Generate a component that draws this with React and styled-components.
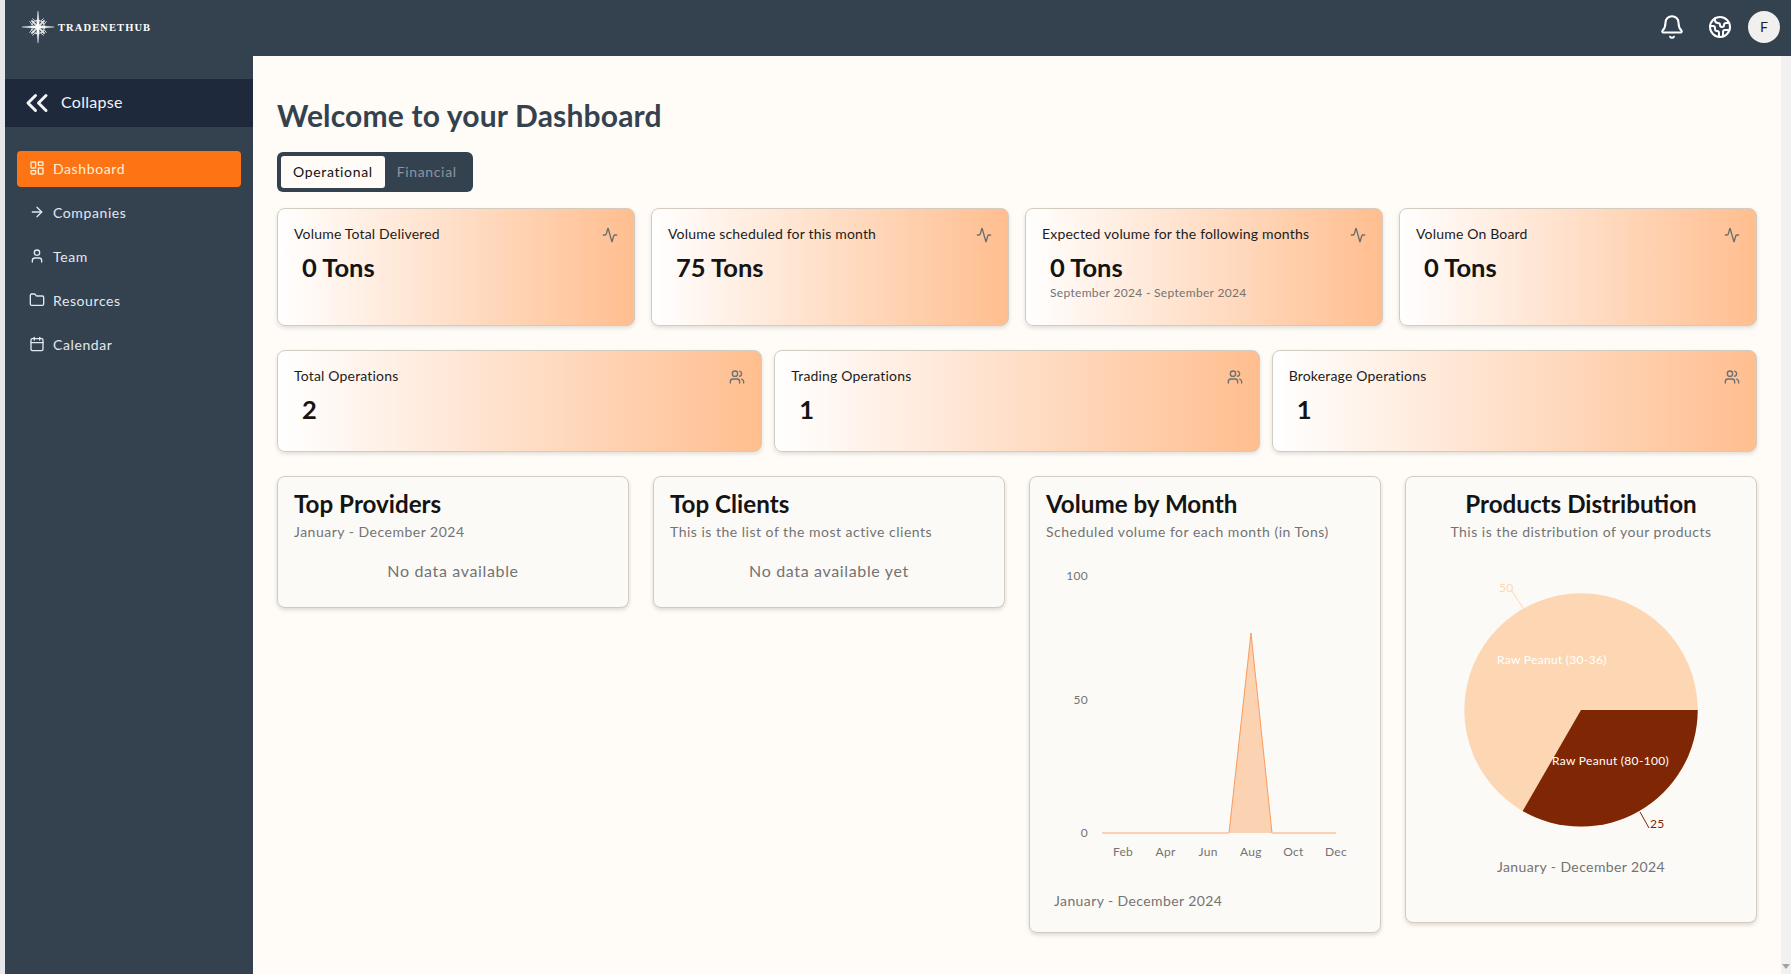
import React from 'react';
import styled, { createGlobalStyle } from 'styled-components';
import { LayoutDashboard, ArrowRight, User, Folder, Calendar, Activity, Users, Bell, Earth, ChevronsLeft } from 'lucide-react';

const Global = createGlobalStyle`
  html, body { margin: 0; padding: 0; height: 100%; overflow: hidden; background: #e5e7eb; }
  #root { height: 100%; }
  * { box-sizing: border-box; }
`;

const FONT = `Lato, "Open Sans", sans-serif`;

const Shell = styled.div`
  height: 974px;
  margin-left: 5px;
  display: flex;
  flex-direction: column;
  font-family: ${FONT};
`;

const Header = styled.header`
  height: 56px;
  flex: none;
  background: #344250;
  display: flex;
  align-items: center;
  padding: 0 11px 2px 16px;
  color: #fff;
`;

const Logo = styled.div`
  display: flex;
  align-items: center;
  gap: 3px;
  font-family: "Liberation Serif", serif;
  font-weight: 700;
  font-size: 10.5px;
  letter-spacing: 1.1px;
  span { padding-top: 1px; }
`;

const HeaderIcons = styled.div`
  margin-left: auto;
  display: flex;
  align-items: center;
`;

const HeaderBtn = styled.span`
  display: flex;
  margin-right: ${(p) => p.$mr}px;
`;

const Avatar = styled.div`
  width: 32px;
  height: 32px;
  border-radius: 50%;
  background: #f1f0ee;
  color: #1a2433;
  font-size: 14px;
  padding-bottom: 2px;
  display: flex;
  align-items: center;
  justify-content: center;
`;

const Body = styled.div`
  flex: 1;
  display: flex;
  min-height: 0;
`;

const Sidebar = styled.aside`
  width: 248px;
  flex: none;
  background: #344250;
  padding-top: 23px;
`;

const CollapseBar = styled.div`
  height: 48px;
  background: #1e293b;
  color: #f1f5f9;
  display: flex;
  align-items: center;
  padding: 0 0 3px 14px;
  gap: 6px;
  font-size: 16px;
  letter-spacing: 0.3px;
  margin-bottom: 24px;
  svg { transform: translateY(1px); }
`;

const Nav = styled.nav`
  display: flex;
  flex-direction: column;
  gap: 8px;
  padding: 0 12px;
`;

const NavItem = styled.div`
  height: 36px;
  border-radius: 4px;
  display: flex;
  align-items: center;
  gap: 8px;
  padding: 0 0 2px 12px;
  font-size: 14px;
  letter-spacing: 0.6px;
  color: ${(p) => (p.$active ? '#ffedd5' : '#e2e8f0')};
  background: ${(p) => (p.$active ? '#fd7415' : 'transparent')};
`;

const Main = styled.main`
  flex: 1;
  min-width: 0;
  background: #fffbf6;
  overflow: hidden;
  padding: 41px 24px 0;
`;

const ScrollTrack = styled.div`
  width: 10px;
  flex: none;
  background: #f1f1f1;
  display: flex;
  align-items: flex-end;
  justify-content: center;
  padding-bottom: 5px;
`;

const ScrollArrow = styled.div`
  width: 0;
  height: 0;
  border-left: 4px solid transparent;
  border-right: 4px solid transparent;
  border-top: 5px solid #a3a3a3;
`;

const Title = styled.h1`
  margin: 0;
  color: #344250;
  font-size: 30px;
  font-weight: 700;
  line-height: 36px;
  letter-spacing: 0.18px;
`;

const Tabs = styled.div`
  display: inline-flex;
  margin-top: 19px;
  height: 40px;
  padding: 4px;
  border-radius: 6px;
  background: #344250;
  vertical-align: top;
`;

const Tab = styled.div`
  display: flex;
  align-items: center;
  height: 32px;
  padding: 0 12px 2px;
  border-radius: 3px;
  font-size: 14px;
  letter-spacing: 0.65px;
  color: ${(p) => (p.$active ? '#111' : '#8b95a0')};
  background: ${(p) => (p.$active ? '#fffbf6' : 'transparent')};
`;

const StatRow = styled.div`
  display: grid;
  grid-template-columns: repeat(${(p) => p.$cols}, 1fr);
  gap: ${(p) => p.$gap}px;
  margin-top: ${(p) => p.$top}px;
`;

const StatCard = styled.div`
  height: ${(p) => p.$h}px;
  border: 1px solid #d3cbc0;
  border-radius: 8px;
  box-shadow: 0 2px 4px rgba(0, 0, 0, 0.12);
  background: linear-gradient(to right, #fff 0%, #ffbe8f 100%);
  padding: 14px 16px;
`;

const StatHead = styled.div`
  display: flex;
  justify-content: space-between;
  align-items: center;
  height: 20px;
  color: #1c1c1c;
  font-size: 14px;
  letter-spacing: 0.18px;
  svg { color: #6b7070; flex: none; transform: translateY(2px); }
`;

const StatValue = styled.div`
  margin-top: 8px;
  padding-left: 8px;
  font-size: 25.5px;
  line-height: 32px;
  font-weight: 700;
  color: #141414;
`;

const StatNote = styled.div`
  margin-top: 2px;
  padding-left: 8px;
  font-size: 12px;
  letter-spacing: 0.32px;
  color: #737373;
  line-height: 16px;
`;

const Panels = styled.div`
  display: grid;
  grid-template-columns: repeat(4, 1fr);
  gap: 24px;
  margin-top: 24px;
  align-items: start;
`;

const Panel = styled.section`
  height: ${(p) => p.$h}px;
  border: 1px solid #d3cbc0;
  border-radius: 8px;
  background: #fcfaf7;
  box-shadow: 0 2px 4px rgba(0, 0, 0, 0.14);
  padding: 11px 16px;
  text-align: ${(p) => (p.$center ? 'center' : 'left')};
`;

const PanelTitle = styled.h2`
  margin: 0;
  font-size: 24.2px;
  line-height: 32px;
  font-weight: 700;
  color: #141414;
`;

const PanelSub = styled.p`
  margin: 2px 0 0;
  font-size: 14px;
  line-height: 20px;
  letter-spacing: 0.5px;
  color: #737373;
`;

const Empty = styled.div`
  margin-top: 18px;
  text-align: center;
  font-size: 16px;
  line-height: 22px;
  letter-spacing: 0.65px;
  color: #737373;
`;

const ChartWrap = styled.div`
  margin: 13px -16px 0;
  height: ${(p) => p.$h}px;
`;

const PanelFoot = styled.div`
  font-size: 14px;
  line-height: 20px;
  letter-spacing: 0.4px;
  color: #737373;
  padding-left: ${(p) => p.$indent || 0}px;
  margin-top: 6px;
`;

const ChartText = styled.text`
  font-family: ${FONT};
  font-size: ${(p) => p.$size || 12}px;
  letter-spacing: 0.3px;
  fill: ${(p) => p.$fill || '#737373'};
`;

const LogoMark = () => (
  <svg width="34" height="34" viewBox="0 0 36 36" fill="none" stroke="#fff">
    <path d="M18 1 L19.4 16.6 L35 18 L19.4 19.4 L18 35 L16.6 19.4 L1 18 L16.6 16.6 Z" fill="#fff" strokeWidth="0.4" />
    <circle cx="18" cy="18" r="7" strokeWidth="1.4" strokeDasharray="2 1" opacity="0.8" />
    <path d="M11 11 L25 25 M25 11 L11 25" strokeWidth="2" opacity="0.85" />
    <path d="M12 9 L18 14 L24 9 M27 12 L22 18 L27 24 M24 27 L18 22 L12 27 M9 24 L14 18 L9 12" strokeWidth="0.8" />
  </svg>
);

const AreaChart = () => {
  const months = ['Feb', 'Apr', 'Jun', 'Aug', 'Oct', 'Dec'];
  return (
    <svg width="350" height="330" viewBox="0 0 350 330">
      <ChartText x="58" y="25" textAnchor="end">100</ChartText>
      <ChartText x="58" y="149" textAnchor="end">50</ChartText>
      <ChartText x="58" y="282" textAnchor="end">0</ChartText>
      <path d="M199 278 L221 78 L242 278 Z" fill="#fbd2b2" />
      <path d="M199 278 L221 78 L242 278" fill="none" stroke="#fb9a5a" strokeWidth="1" />
      <path d="M72 278 L199 278 M242 278 L306 278" fill="none" stroke="#fbc39b" strokeWidth="1.6" />
      {months.map((m, i) => (
        <ChartText key={m} x={93 + i * 42.6} y={301} textAnchor="middle">{m}</ChartText>
      ))}
    </svg>
  );
};

const PieChart = () => (
  <svg width="350" height="296" viewBox="0 0 350 296">
    <circle cx="175" cy="155" r="116.7" fill="#fdd7b4" />
    <path d="M175 155 L291.7 155 A116.7 116.7 0 0 1 116.7 256 Z" fill="#7f2604" />
    <path d="M117 53 L106 36" stroke="#fdd7b4" fill="none" />
    <path d="M234 257 L243 273" stroke="#7f2604" fill="none" />
    <ChartText x="93" y="37" $fill="#fdd7b4">50</ChartText>
    <ChartText x="244" y="273" $fill="#7f2604">25</ChartText>
    <ChartText x="91" y="109" $fill="#fff">Raw Peanut (30-36)</ChartText>
    <ChartText x="146" y="210" $fill="#fff">Raw Peanut (80-100)</ChartText>
  </svg>
);

const navItems = [
  { label: 'Dashboard', Icon: LayoutDashboard, active: true },
  { label: 'Companies', Icon: ArrowRight },
  { label: 'Team', Icon: User },
  { label: 'Resources', Icon: Folder },
  { label: 'Calendar', Icon: Calendar },
];

const volumeStats = [
  { title: 'Volume Total Delivered', value: '0 Tons' },
  { title: 'Volume scheduled for this month', value: '75 Tons' },
  { title: 'Expected volume for the following months', value: '0 Tons', note: 'September 2024 - September 2024' },
  { title: 'Volume On Board', value: '0 Tons' },
];

const opStats = [
  { title: 'Total Operations', value: '2' },
  { title: 'Trading Operations', value: '1' },
  { title: 'Brokerage Operations', value: '1' },
];

export default function App() {
  return (
    <>
      <Global />
      <Shell>
        <Header>
          <Logo>
            <LogoMark />
            <span>TRADENETHUB</span>
          </Logo>
          <HeaderIcons>
            <HeaderBtn $mr={23}><Bell size={26} strokeWidth={1.9} /></HeaderBtn>
            <HeaderBtn $mr={16}><Earth size={24} strokeWidth={2} /></HeaderBtn>
            <Avatar>F</Avatar>
          </HeaderIcons>
        </Header>
        <Body>
          <Sidebar>
            <CollapseBar>
              <ChevronsLeft size={36} strokeWidth={2} />
              Collapse
            </CollapseBar>
            <Nav>
              {navItems.map(({ label, Icon, active }) => (
                <NavItem key={label} $active={active}>
                  <Icon size={16} />
                  {label}
                </NavItem>
              ))}
            </Nav>
          </Sidebar>
          <Main>
            <Title>Welcome to your Dashboard</Title>
            <div>
              <Tabs>
                <Tab $active>Operational</Tab>
                <Tab>Financial</Tab>
              </Tabs>
            </div>
            <StatRow $cols={4} $gap={16} $top={16}>
              {volumeStats.map((s) => (
                <StatCard key={s.title} $h={118}>
                  <StatHead>{s.title}<Activity size={16} /></StatHead>
                  <StatValue>{s.value}</StatValue>
                  {s.note && <StatNote>{s.note}</StatNote>}
                </StatCard>
              ))}
            </StatRow>
            <StatRow $cols={3} $gap={12} $top={24}>
              {opStats.map((s) => (
                <StatCard key={s.title} $h={102}>
                  <StatHead>{s.title}<Users size={16} /></StatHead>
                  <StatValue>{s.value}</StatValue>
                </StatCard>
              ))}
            </StatRow>
            <Panels>
              <Panel $h={132}>
                <PanelTitle>Top Providers</PanelTitle>
                <PanelSub>January - December 2024</PanelSub>
                <Empty>No data available</Empty>
              </Panel>
              <Panel $h={132}>
                <PanelTitle>Top Clients</PanelTitle>
                <PanelSub>This is the list of the most active clients</PanelSub>
                <Empty>No data available yet</Empty>
              </Panel>
              <Panel $h={457}>
                <PanelTitle>Volume by Month</PanelTitle>
                <PanelSub>Scheduled volume for each month (in Tons)</PanelSub>
                <ChartWrap $h={330}><AreaChart /></ChartWrap>
                <PanelFoot $indent={8}>January - December 2024</PanelFoot>
              </Panel>
              <Panel $h={447} $center>
                <PanelTitle>Products Distribution</PanelTitle>
                <PanelSub>This is the distribution of your products</PanelSub>
                <ChartWrap $h={296}><PieChart /></ChartWrap>
                <PanelFoot>January - December 2024</PanelFoot>
              </Panel>
            </Panels>
          </Main>
          <ScrollTrack><ScrollArrow /></ScrollTrack>
        </Body>
      </Shell>
    </>
  );
}
